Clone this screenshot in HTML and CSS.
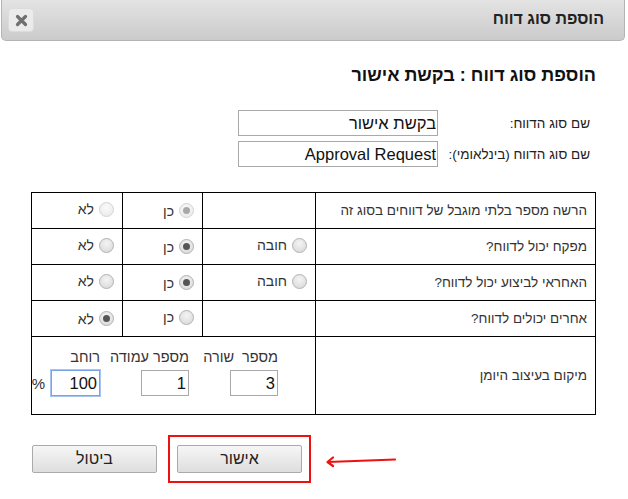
FILE: index.html
```html
<!DOCTYPE html>
<html lang="he" dir="rtl">
<head>
<meta charset="utf-8">
<title>הוספת סוג דווח</title>
<link rel="stylesheet" href="styles.css">
</head>
<body>
<div class="dialog">
  <div class="titlebar">
    <span class="title">הוספת סוג דווח</span>
    <button class="close" type="button" aria-label="סגור">
      <svg width="13" height="13" viewBox="0 0 13 13"><path d="M2.5 2.5 L10.5 10.5 M10.5 2.5 L2.5 10.5" stroke="#707070" stroke-width="3.2" stroke-linecap="round"/></svg>
    </button>
  </div>

  <div class="content">
    <h1 class="heading">הוספת סוג דווח : בקשת אישור</h1>

    <div class="fields">
      <label class="flabel">שם סוג הדווח:</label>
      <input class="finput" type="text" value="בקשת אישור">
      <label class="flabel">שם סוג הדווח (בינלאומי):</label>
      <input class="finput" type="text" value="Approval Request">
    </div>

    <table class="opts">
      <colgroup>
        <col class="c-label"><col class="c-3"><col class="c-2"><col class="c-1">
      </colgroup>
      <tr>
        <td class="lbl">הרשה מספר בלתי מוגבל של דווחים בסוג זה</td>
        <td></td>
        <td><span class="opt"><span class="radio disabled checked"></span>כן</span></td>
        <td><span class="opt"><span class="radio disabled"></span>לא</span></td>
      </tr>
      <tr>
        <td class="lbl">מפקח יכול לדווח?</td>
        <td><span class="opt"><span class="radio"></span>חובה</span></td>
        <td><span class="opt"><span class="radio checked"></span>כן</span></td>
        <td><span class="opt"><span class="radio"></span>לא</span></td>
      </tr>
      <tr>
        <td class="lbl">האחראי לביצוע יכול לדווח?</td>
        <td><span class="opt"><span class="radio"></span>חובה</span></td>
        <td><span class="opt"><span class="radio checked"></span>כן</span></td>
        <td><span class="opt"><span class="radio"></span>לא</span></td>
      </tr>
      <tr>
        <td class="lbl">אחרים יכולים לדווח?</td>
        <td></td>
        <td><span class="opt"><span class="radio"></span>כן</span></td>
        <td><span class="opt"><span class="radio checked"></span>לא</span></td>
      </tr>
      <tr class="pos-row">
        <td class="lbl">מיקום בעיצוב היומן</td>
        <td colspan="3" class="pos-cell">
          <div class="pos">
            <div class="grp">
              <span class="glabel">מספר&nbsp; שורה</span>
              <input class="num" type="text" value="3">
            </div>
            <div class="grp">
              <span class="glabel">מספר עמודה</span>
              <input class="num" type="text" value="1">
            </div>
            <div class="grp last">
              <span class="glabel">רוחב</span>
              <span class="wrow"><input class="num focus" type="text" value="100"><span class="pct">%</span></span>
            </div>
          </div>
        </td>
      </tr>
    </table>

    <div class="footer">
      <button class="btn" type="button">ביטול</button>
      <div class="highlight"><button class="btn" type="button">אישור</button></div>
      <svg class="arrow" width="80" height="20" viewBox="0 0 80 20">
        <path d="M73 8.5 L6 11" stroke="#ee1111" stroke-width="2.2" stroke-linecap="round" fill="none"/>
        <path d="M11 6.5 L5.5 11 L11 15" stroke="#ee1111" stroke-width="2.2" stroke-linecap="round" stroke-linejoin="round" fill="none"/>
      </svg>
    </div>
  </div>
</div>
</body>
</html>
```

FILE: styles.css
```css
* { box-sizing: border-box; }

html, body {
  margin: 0;
  padding: 0;
  background: #ffffff;
}

body {
  font-family: "Liberation Sans", Arial, sans-serif;
  color: #222;
  direction: rtl;
  width: 628px;
  height: 499px;
  overflow: hidden;
}

.titlebar {
  height: 41px;
  margin: 0 3px 0 1px;
  border: 1px solid #b4b4b4;
  border-top: none;
  border-radius: 0 0 5px 5px;
  background: linear-gradient(#e3e3e3, #cbcbcb);
  display: flex;
  align-items: center;
  justify-content: space-between;
  padding: 0 20px 2px 6px;
}

.title {
  font-weight: bold;
  font-size: 16px;
  color: #222;
}

.close {
  width: 26px;
  height: 24px;
  margin-top: 2px;
  border: 1px solid #dcdcdc;
  border-radius: 4px;
  background: #ebebeb;
  display: flex;
  align-items: center;
  justify-content: center;
  padding: 0;
}

.content {
  padding: 0 32px 0 32px;
}

.heading {
  margin: 24px 0 0 0;
  font-size: 18px;
  font-weight: bold;
  color: #111;
  line-height: 20px;
}

.fields {
  margin-top: 25px;
  display: grid;
  grid-template-columns: 158px 200px;
  row-gap: 5px;
  align-items: center;
}

.flabel {
  font-size: 13.5px;
  color: #222;
  padding-right: 6px;
}

.finput {
  width: 200px;
  height: 26px;
  border: 1px solid #a9a9a9;
  font-family: "Liberation Sans", Arial, sans-serif;
  font-size: 16.5px;
  color: #111;
  padding: 0 1px 0 2px;
  text-align: right;
  direction: rtl;
}

.opts {
  margin-top: 25px;
  width: 564px;
  border-collapse: collapse;
  table-layout: fixed;
  font-size: 13.5px;
}

.c-label { width: 280px; }
.c-3 { width: 113px; }
.c-2 { width: 80px; }
.c-1 { width: 91px; }

.opts td {
  border: 1px solid #000;
  height: 36px;
  padding: 0 8px 0 4px;
  vertical-align: middle;
  text-align: right;
  color: #333;
}

.opt {
  display: inline-flex;
  align-items: center;
  gap: 5px;
  font-size: 14px;
  color: #333;
}

.radio {
  width: 15px;
  height: 15px;
  border-radius: 50%;
  border: 1px solid #b3b3b3;
  background: radial-gradient(circle at 50% 35%, #f4f4f4, #d6d6d6);
  display: inline-flex;
  align-items: center;
  justify-content: center;
  flex: none;
}

.radio.checked::after {
  content: "";
  width: 7px;
  height: 7px;
  border-radius: 50%;
  background: #555;
}

.radio.disabled {
  border-color: #d4d4d4;
  background: radial-gradient(circle at 50% 35%, #fafafa, #e8e8e8);
}

.radio.disabled.checked::after {
  background: #a8a8a8;
}

.pos-row td { height: 78px; }

.opts td.pos-cell {
  padding: 12px 37px 16px 0;
  vertical-align: top;
}

.pos {
  display: flex;
}

.grp {
  flex: none;
  width: 89px;
  display: flex;
  flex-direction: column;
  align-items: flex-start;
  gap: 4px;
}

.grp.last {
  width: auto;
}

.glabel {
  font-size: 14.5px;
  color: #333;
  line-height: 17px;
  white-space: nowrap;
}

.wrow {
  display: flex;
  align-items: center;
  gap: 6px;
}

.num {
  width: 48px;
  height: 26px;
  border: 1px solid #a9a9a9;
  font-family: "Liberation Sans", Arial, sans-serif;
  font-size: 16.5px;
  color: #111;
  text-align: right;
  padding: 0 2px;
}

.num.focus {
  width: 49px;
  border: 1px solid #7aa2e6;
  box-shadow: 0 0 0 1px #a9c4f0;
}

.pct {
  font-size: 15px;
  color: #333;
}

.footer {
  margin-top: 20px;
  direction: ltr;
  display: flex;
  align-items: center;
}

.btn {
  width: 125px;
  height: 28px;
  border: 1px solid #aaaaaa;
  border-radius: 2px;
  background: linear-gradient(#f6f6f6, #dedede);
  font-family: "Liberation Sans", Arial, sans-serif;
  font-size: 16px;
  color: #222;
  padding: 0;
}

.highlight {
  margin-left: 11px;
  border: 2px solid #ee1111;
  padding: 8px 7px;
}

.arrow {
  margin-left: 11px;
  margin-top: 4px;
}
```
